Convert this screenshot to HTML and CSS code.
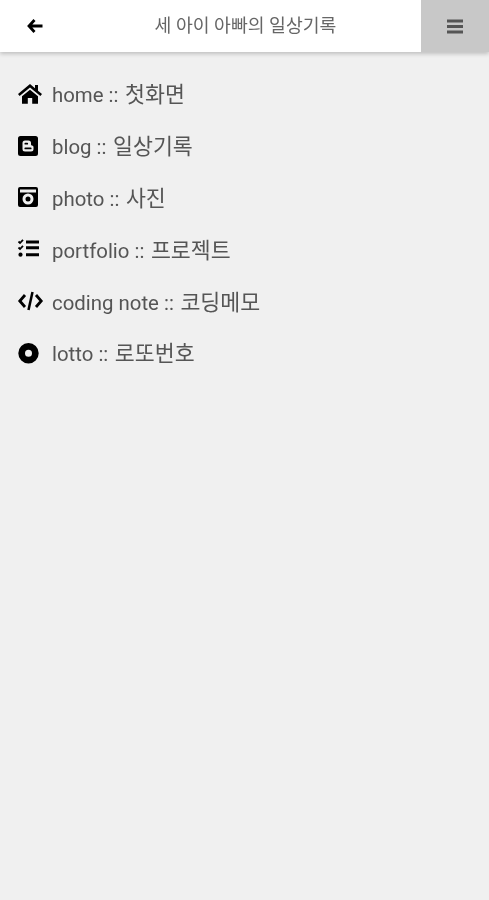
FILE: index.html
```html
<!DOCTYPE html>
<html lang="ko">
<head>
<meta charset="utf-8">
<title>세 아이 아빠의 일상기록</title>
<link rel="stylesheet" href="styles.css">
</head>
<body>
<header class="topbar">
  <button class="back" aria-label="back">
    <svg class="back-icon" viewBox="0 0 16 14"><path d="M7.500 1 2 7l5.500 6M2.500 7H15.500" fill="none" stroke="#000" stroke-width="2.800"/></svg>
  </button>
  <h1 class="title">세 아이 아빠의 일상기록</h1>
  <button class="menu" aria-label="menu">
    <svg class="menu-icon" viewBox="0 0 16 15"><path d="M0 2h16M0 7.500h16M0 13h16" fill="none" stroke="#555" stroke-width="3"/></svg>
  </button>
</header>
<nav class="nav">
  <a class="item">
    <svg class="icon" viewBox="0 0 26 20"><path d="M12 0 0 10l1.600 2L12 3.500 22.400 12 24 10l-4-3.300V1h-3v3.200z"/><path d="M12 5.800 4 12.300V19.800H9.800V14h4.400V19.800H20V12.300z"/></svg>
    <span class="label">home :: <span class="ko">첫화면</span></span>
  </a>
  <a class="item">
    <svg class="icon" viewBox="0 0 26 20"><path fill-rule="evenodd" d="M2.500 0h15A2.500 2.500 0 0 1 20 2.500v15a2.500 2.500 0 0 1-2.500 2.500h-15A2.500 2.500 0 0 1 0 17.500v-15A2.500 2.500 0 0 1 2.500 0zM7 4.500A2.500 2.500 0 0 0 4.500 7v6A2.500 2.500 0 0 0 7 15.500h6a2.500 2.500 0 0 0 2.500-2.500v-2A1.500 1.500 0 0 0 14 9.500a1 1 0 0 1-1-1V7a2.500 2.500 0 0 0-2.500-2.500zM7.300 6.800h2a.8.8 0 0 1 0 1.700h-2a.8.8 0 0 1 0-1.700zM7.300 11.500h5.400a.9.9 0 0 1 0 1.800H7.300a.9.9 0 0 1 0-1.800z"/></svg>
    <span class="label">blog :: <span class="ko">일상기록</span></span>
  </a>
  <a class="item">
    <svg class="icon" viewBox="0 0 26 20"><path fill-rule="evenodd" d="M2 0h16a2 2 0 0 1 2 2v16a2 2 0 0 1-2 2H2a2 2 0 0 1-2-2V2a2 2 0 0 1 2-2zM2 2.500v3h16v-3zM10 6.500a5.500 5.500 0 1 0 0 11 5.500 5.500 0 0 0 0-11zM10 9.500a2.500 2.500 0 1 1 0 5 2.500 2.500 0 0 1 0-5z"/></svg>
    <span class="label">photo :: <span class="ko">사진</span></span>
  </a>
  <a class="item">
    <svg class="icon" viewBox="0 0 26 20"><path d="M.5 2.500 2 4 5 .8M.5 8.500 2 10l3-3.200" fill="none" stroke="#000" stroke-width="1.800"/><circle cx="2.500" cy="15.700" r="2.100"/><path d="M8 1.500h13v3H8zM8 7.200h13v3H8zM8 14.200h13v3H8z"/></svg>
    <span class="label">portfolio :: <span class="ko">프로젝트</span></span>
  </a>
  <a class="item">
    <svg class="icon" viewBox="0 0 26 20"><path d="M7 4 1.800 10 7 16M18 4l5.200 6L18 16" fill="none" stroke="#000" stroke-width="2.800"/><path d="M14.500 1 10.500 19" fill="none" stroke="#000" stroke-width="2.500"/></svg>
    <span class="label">coding note :: <span class="ko">코딩메모</span></span>
  </a>
  <a class="item">
    <svg class="icon" viewBox="0 0 26 20"><path fill-rule="evenodd" d="M10.500 0a10.200 10.200 0 1 1 0 20.400 10.200 10.200 0 0 1 0-20.400zM10.500 6.700a3.500 3.500 0 1 0 0 7 3.500 3.500 0 0 0 0-7z"/></svg>
    <span class="label">lotto :: <span class="ko">로또번호</span></span>
  </a>
</nav>
</body>
</html>
```
FILE: styles.css
```css
* { box-sizing: border-box; }
html, body { margin: 0; height: 100%; }
body {
  background: #f0f0f0;
  font-family: Roboto, "Noto Sans CJK KR", sans-serif;
  color: #555;
}
.topbar {
  height: 52px;
  background: #fff;
  display: flex;
  align-items: stretch;
  box-shadow: 0 2px 4px rgba(0,0,0,.2);
}
.back, .menu {
  border: 0;
  padding: 0;
  display: flex;
  align-items: center;
  justify-content: center;
  background: transparent;
}
.back { width: 70px; }
.back-icon { width: 16px; height: 14px; filter: blur(.4px); }
.title {
  flex: 1;
  margin: 0;
  font-size: 18.300px;
  font-weight: 400;
  line-height: 52px;
  text-align: center;
  color: #666;
  filter: blur(.4px);
}
.menu { width: 68px; background: #c8c8c8; }
.menu-icon { width: 16px; height: 15px; filter: blur(.4px); }
.nav {
  padding: 16px 0 0 18px;
  display: flex;
  flex-direction: column;
}
.item {
  height: 51.800px;
  display: flex;
  align-items: center;
  gap: 8px;
  font-size: 20.400px;
  color: #555;
}
.icon { width: 26px; height: 20px; flex: none; filter: blur(.4px); overflow: visible; }
.label { margin-bottom: 2px; filter: blur(.4px); }
.ko { margin-left: 1.500px; font-size: 21.700px; }
```
